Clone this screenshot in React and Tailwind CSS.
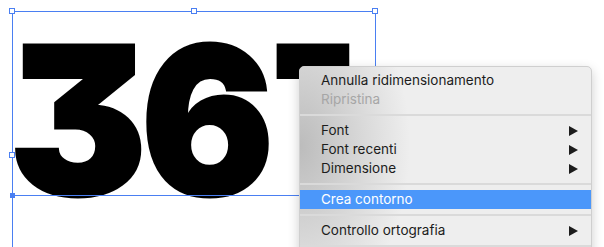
// context menu entries, null = separator
const menuItems = [
  { label: "Annulla ridimensionamento" },
  { label: "Ripristina", disabled: true },
  null,
  { label: "Font", sub: true },
  { label: "Font recenti", sub: true },
  { label: "Dimensione", sub: true },
  null,
  { label: "Crea contorno", active: true },
  null,
  { label: "Controllo ortografia", sub: true },
  null,
];

const Handle = ({ className }) => (
  <div className={`absolute w-[6px] h-[6px] border border-[#4a7ff2] bg-white ${className}`} />
);

const Arrow = () => (
  <svg width="9" height="10" viewBox="0 0 9 10" className="fill-[#1c1c1c]">
    <path d="M0 0 L9 5 L0 10 Z" />
  </svg>
);

export default function App() {
  return (
    <div className="relative w-[604px] h-[247px] overflow-hidden bg-white">
      {/* big text on the artboard */}
      <div className="absolute left-[9px] top-[17px] flex font-['Inter',sans-serif] font-black text-[206px] leading-none text-black [font-feature-settings:'cv09'] [-webkit-text-stroke:3px_#000] whitespace-nowrap">
        <span className="w-[132px]">3</span>
        <span className="w-[133px] origin-left scale-x-[0.957]">6</span>
        {/* the stem of the 7 sits behind the menu */}
        <span className="origin-left scale-x-[0.636] [clip-path:polygon(0_0,100%_0,100%_100%,40px_100%,40px_66px,0_66px)]">7</span>
      </div>

      {/* selection box */}
      <div className="absolute left-[12px] top-[11px] w-[364px] h-[290px] border border-[#4a7ff2]" />
      <div className="absolute left-[12px] top-[195px] w-[300px] h-px bg-[#4a7ff2]" />
      <Handle className="left-[9px] top-[8px]" />
      <Handle className="left-[191px] top-[8px]" />
      <Handle className="left-[372px] top-[8px]" />
      <Handle className="left-[9px] top-[152px]" />
      <div className="absolute left-[10px] top-[193px] w-[5px] h-[5px] bg-[#4a7ff2]" />

      {/* context menu */}
      <div className="absolute left-[299px] top-[66px] w-[293px] h-[200px] rounded-[5px] border border-[#cfcfcf] bg-[#eeeeee] shadow-[0_4px_12px_rgba(0,0,0,0.2)] overflow-hidden font-['Inter',sans-serif] text-[13.5px]">
        <div className="absolute inset-0 bg-[radial-gradient(110px_170px_at_0%_40%,#bcbcbc,rgba(238,238,238,0))]" />
        <div className="relative pt-[4px]">
          {menuItems.map((item, i) =>
            item === null ? (
              <div key={i} className="h-[12px] flex items-center">
                <div className="w-full h-[2px] bg-[#dadada]" />
              </div>
            ) : (
              <div
                key={i}
                className={`h-[19px] flex items-center justify-between pl-[21px] pr-[13px] ${
                  item.active ? "bg-[#4b97fa] text-white" : item.disabled ? "text-[#a6a6a6]" : "text-[#1c1c1c]"
                }`}
              >
                <span>{item.label}</span>
                {item.sub && <Arrow />}
              </div>
            )
          )}
        </div>
      </div>
    </div>
  );
}
